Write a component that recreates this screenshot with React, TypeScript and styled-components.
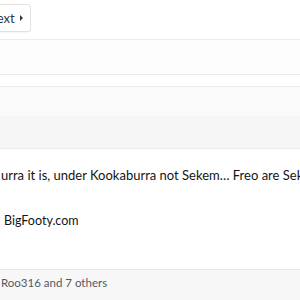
import React from "react";
import styled, { createGlobalStyle } from "styled-components";

const Global = createGlobalStyle`
  html, body { margin: 0; padding: 0; background: #fff; }
  body { font-family: Lato, "Noto Sans", sans-serif; color: #141414; }
  #root { width: 300px; height: 300px; overflow: hidden; }
`;

const Page = styled.div`
  width: 300px;
  height: 300px;
  overflow: hidden;
  display: flex;
  flex-direction: column;
  background: #fff;
`;

const PageNav = styled.div`
  height: 40px;
  box-sizing: border-box;
  padding-top: 4px;
  border-bottom: 1px solid #ebebeb;
  display: flex;
  align-items: flex-start;
`;

const NavButton = styled.div`
  height: 28px;
  box-sizing: border-box;
  margin-left: -22px;
  padding: 0 7px 0 8px;
  display: flex;
  align-items: center;
  gap: 5px;
  border: 1px solid #e3e3e3;
  border-radius: 3px;
  background: #fff;
  box-shadow: 0 1px 1px rgba(0,0,0,0.04);
  font-size: 13px;
  color: #2b3a4a;
`;

const Caret = styled.span`
  width: 0;
  height: 0;
  border-top: 3px solid transparent;
  border-bottom: 3px solid transparent;
  border-left: 3px solid #2b3a4a;
`;

const Band = styled.div<{ $h: number; $bg: string; $border?: boolean }>`
  height: ${(p) => p.$h}px;
  flex: none;
  background: ${(p) => p.$bg};
  border-bottom: ${(p) => (p.$border ? "1px solid #ebebeb" : "none")};
`;

const MessageBody = styled.div`
  flex: 1;
  display: flex;
  flex-direction: column;
  padding-top: 18px;
  font-size: 13px;
  line-height: 17px;
  white-space: nowrap;
  overflow: hidden;
`;

const Line = styled.div<{ $indent: number; $size?: number }>`
  padding-left: ${(p) => p.$indent}px;
  font-size: ${(p) => p.$size ?? 13}px;
  color: #141414;
`;

const Spacer = styled.div`
  height: 28px;
`;

const Footer = styled.div`
  height: 31px;
  flex: none;
  box-sizing: border-box;
  border-top: 1px solid #e6e6e6;
  background: #f7f7f7;
  display: flex;
  align-items: center;
  padding-left: 1px;
  padding-bottom: 5px;
  font-size: 11.5px;
  color: #505a64;
  white-space: nowrap;
`;

export default function App() {
  return (
    <>
      <Global />
      <Page>
        <PageNav>
          <NavButton>
            <span>Next</span>
            <Caret />
          </NavButton>
        </PageNav>
        <Band $h={34} $bg="#fdfdfd" $border />
        <Band $h={11} $bg="#ffffff" $border />
        <Band $h={29} $bg="#fafafa" />
        <Band $h={32} $bg="#f6f6f6" $border />
        <MessageBody>
          <Line $indent={1}>urra it is, under Kookaburra not Sekem… Freo are Sekem</Line>
          <Spacer />
          <Line $indent={4} $size={12.5}>BigFooty.com</Line>
        </MessageBody>
        <Footer>Roo316 and 7 others</Footer>
      </Page>
    </>
  );
}
